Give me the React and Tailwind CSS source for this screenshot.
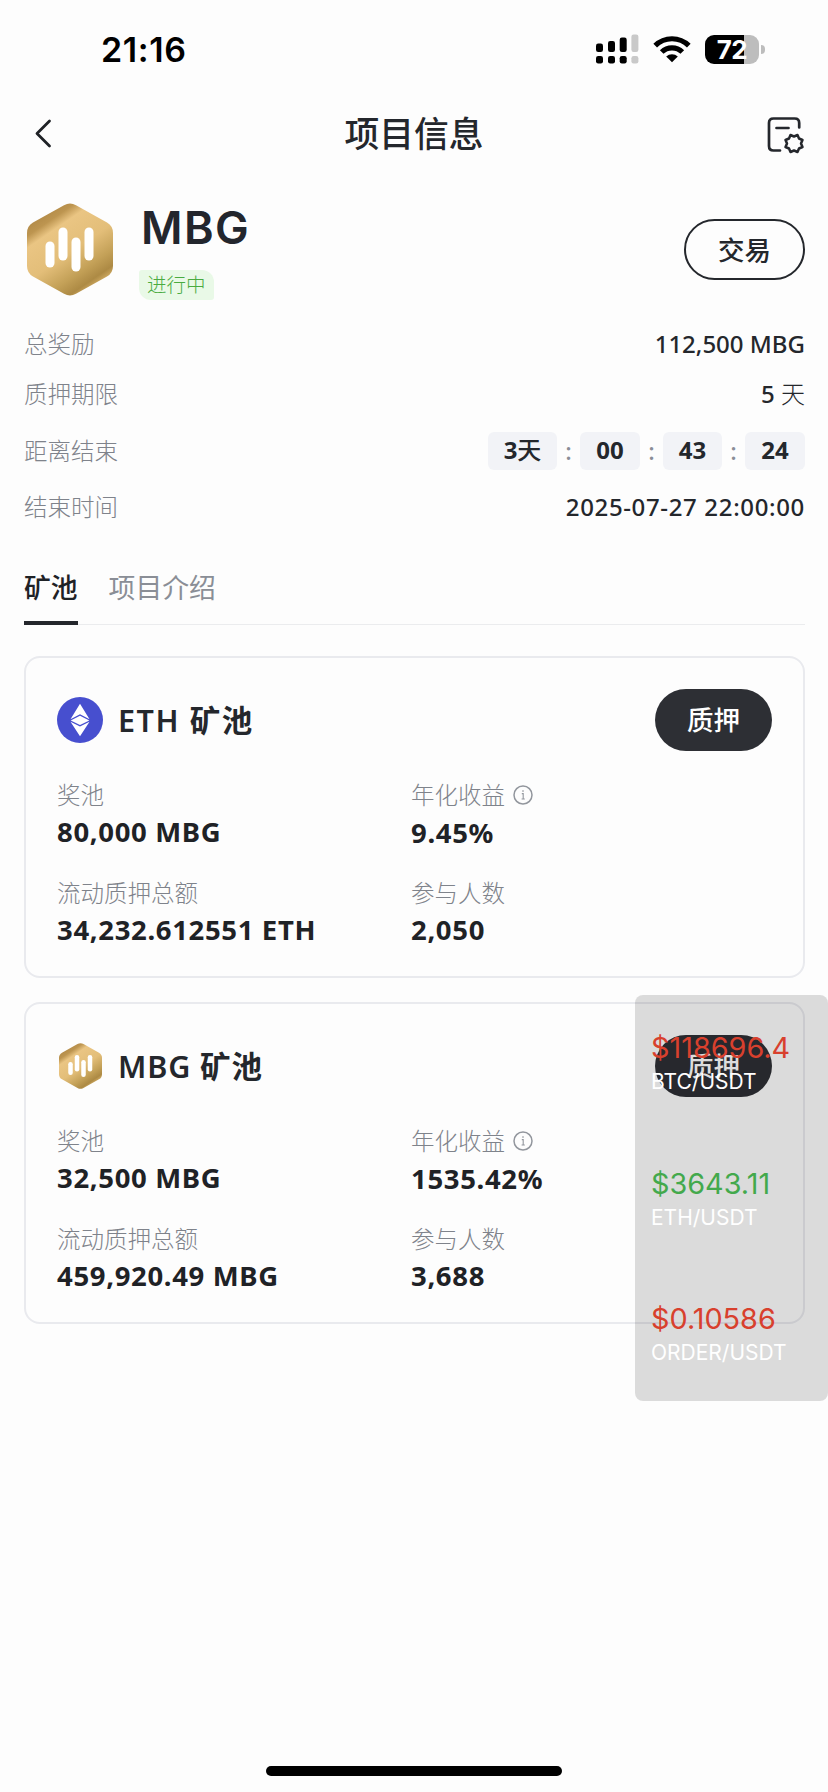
import React from 'react';

const pools = [
  {
    name: 'ETH 矿池',
    coin: 'eth',
    reward: '80,000 MBG',
    apr: '9.45%',
    staked: '34,232.612551 ETH',
    members: '2,050',
  },
  {
    name: 'MBG 矿池',
    coin: 'mbg',
    reward: '32,500 MBG',
    apr: '1535.42%',
    staked: '459,920.49 MBG',
    members: '3,688',
  },
];

const tickers = [
  { price: '$118696.4', pair: 'BTC/USDT', up: false },
  { price: '$3643.11', pair: 'ETH/USDT', up: true },
  { price: '$0.10586', pair: 'ORDER/USDT', up: false },
];

const MbgLogo = ({ className, id }) => (
  <svg viewBox="0 0 86 93" className={className} preserveAspectRatio="none">
    <defs>
      <linearGradient id={id} gradientUnits="userSpaceOnUse" x1="10" y1="12" x2="66" y2="94">
        <stop offset="0" stopColor="#b08846" />
        <stop offset="0.12" stopColor="#bd9550" />
        <stop offset="0.22" stopColor="#eac583" />
        <stop offset="0.5" stopColor="#e3be79" />
        <stop offset="0.72" stopColor="#c3a057" />
        <stop offset="0.85" stopColor="#ad8a44" />
        <stop offset="0.92" stopColor="#cfaa62" />
        <stop offset="1" stopColor="#dcb872" />
      </linearGradient>
    </defs>
    <path
      d="M37 2.2Q43 -1.2 49 2.2L80 19.5Q86 23 86 30V63Q86 70 80 73.5L49 90.8Q43 94.2 37 90.8L6 73.5Q0 70 0 63V30Q0 23 6 19.5Z"
      fill={`url(#${id})`}
    />
    <g stroke="#fff" strokeWidth="9" strokeLinecap="round">
      <path d="M23 43V60" />
      <path d="M36 29V53" />
      <path d="M49 39V64" />
      <path d="M62 29V53" />
    </g>
  </svg>
);

const EthLogo = () => (
  <svg viewBox="0 0 46 46" className="h-[46px] w-[46px]">
    <circle cx="23" cy="23" r="23" fill="#474fcf" />
    <path d="M23 6.8L32.5 22.2L23 17.2L13.5 22.2Z" fill="#fff" />
    <path d="M23 18.7L32.3 23.4L23 28L13.7 23.4Z" fill="#fff" />
    <path d="M13.5 24.8L23 29.6L32.5 24.8L23 39.2Z" fill="#fff" />
  </svg>
);

const InfoIcon = () => (
  <svg viewBox="0 0 20 20" className="ml-[8px] h-5 w-5" fill="none" stroke="#92969d" strokeWidth="1.5">
    <circle cx="10" cy="10" r="9" />
    <path d="M8.8 8.6H10.2V14M8.6 14H11.8" strokeWidth="1.1" />
    <circle cx="10" cy="6" r="0.5" fill="#92969d" strokeWidth="0.6" />
  </svg>
);

const StatusBar = () => (
  <div className="flex h-[98px] items-center justify-between pr-[63px] pl-[101px]">
    <span className="pt-[2px] font-['Inter'] text-[34px] leading-[40px] font-semibold tracking-[0.6px] text-black">21:16</span>
    <div className="flex items-center">
      <svg viewBox="0 0 43 30" className="h-[30px] w-[43px]">
        <rect x="0" y="9.5" width="7" height="8.5" rx="2.2" />
        <rect x="12" y="7" width="7" height="11" rx="2.2" />
        <rect x="23.7" y="3.5" width="7" height="14.5" rx="2.2" />
        <rect x="35.4" y="0.5" width="7" height="17.5" rx="2.2" fill="#c9c9c9" />
        <rect x="0" y="22" width="7" height="7.5" rx="2.2" />
        <rect x="12" y="22" width="7" height="7.5" rx="2.2" />
        <rect x="23.7" y="22" width="7" height="7.5" rx="2.2" />
        <rect x="35.4" y="22" width="7" height="7.5" rx="2.2" fill="#c9c9c9" />
      </svg>
      <svg viewBox="0 0 38 28" className="ml-[14px] h-[28px] w-[38px]" fill="none" stroke="#000" strokeWidth="5.2">
        <path d="M2.2 10.6A24 24 0 0 1 35.8 10.6" />
        <path d="M8.7 17A14.8 14.8 0 0 1 29.3 17" />
        <path d="M19 27.3L13.2 21.6A8.4 8.4 0 0 1 24.8 21.6Z" fill="#000" stroke="none" />
      </svg>
      <div className="relative ml-[14px] flex h-[29px] w-[54px] items-center justify-center overflow-hidden rounded-[9px] bg-[linear-gradient(90deg,#000_72%,#bdbdbd_72%)]">
        <span className="font-['Inter'] text-[26px] leading-[29px] font-bold tracking-[-0.5px] text-white">72</span>
      </div>
      <div className="ml-[2px] h-[9px] w-[4px] rounded-r-full bg-[#bdbdbd]" />
    </div>
  </div>
);

const Header = () => (
  <div className="flex h-[72px] items-center justify-between pr-[23px] pl-[35px]">
    <svg viewBox="0 0 26 30" className="h-[30px] w-[26px]" fill="none" stroke="#1f2226" strokeWidth="2.8" strokeLinecap="round" strokeLinejoin="round">
      <path d="M14.5 2L2 14.5L14.5 27" />
    </svg>
    <h1 className="text-[34.8px] leading-[40px] font-medium text-[#24272c]">项目信息</h1>
    <svg viewBox="0 0 38 38" className="mt-[2px] h-[38px] w-[38px]" fill="none" stroke="#24272c" strokeWidth="2.7" strokeLinecap="round" strokeLinejoin="round">
      <path d="M32.2 11.500V7Q32.2 2.5 27.7 2.5H6.5Q2 2.5 2 7V30Q2 34.5 6.5 34.5H13" />
      <path d="M9.5 12H21.5" />
      <path d="M35.5 31L32 32.5L30.5 36L27 34.5L23.5 36L22 32.5L18.5 31L20 27.5L18.5 24L22 22.5L23.5 19L27 20.5L30.5 19L32 22.5L35.5 24L34 27.5Z" strokeWidth="2.5" />
    </svg>
  </div>
);

const Profile = () => (
  <div className="flex h-[149px] pr-[23px] pl-[24px]">
    <MbgLogo id="mbgLarge" className="mt-[33px] ml-[3px] h-[93px] w-[86px]" />
    <div className="ml-[26px] flex flex-col items-start">
      <div className="mt-[34px] ml-[2px] font-['Inter'] text-[45px] leading-[48px] font-semibold tracking-[1.4px] text-[#23262d]">MBG</div>
      <div className="mt-[18px] h-[30px] rounded-tl-[3px] rounded-tr-[12px] rounded-br-[3px] rounded-bl-[12px] bg-[#e9f9e7] px-[8px] text-[19.5px] leading-[29px] font-light text-[#4aab40]">
        进行中
      </div>
    </div>
    <button className="mt-[49px] ml-auto h-[61px] w-[121px] rounded-full border-2 border-[#24272c] text-[26.5px] leading-[54px] font-medium text-[#24272c]">
      交易
    </button>
  </div>
);

const Row = ({ label, className, children }) => (
  <div className={`flex items-center justify-between pr-[23px] pl-[24px] ${className}`}>
    <span className="text-[23.5px] leading-[28px] font-light text-[#7f838b]">{label}</span>
    <span className="text-[24px] leading-[28px] font-medium whitespace-nowrap text-[#24272c]">{children}</span>
  </div>
);

const TimeBox = ({ className, children }) => (
  <span className={`flex h-[38px] items-center justify-center rounded-[6px] bg-[#f2f3f7] pb-[2px] font-bold ${className}`}>
    {children}
  </span>
);

const Colon = () => <span className="w-[23px] text-center font-medium text-[#8a8e96]">:</span>;

const Info = () => (
  <div>
    <Row label="总奖励" className="h-[50px]">112,500 MBG</Row>
    <Row label="质押期限" className="h-[50px]">
      5 <span className="font-light">天</span>
    </Row>
    <Row label="距离结束" className="h-[64px]">
      <span className="flex items-center">
        <TimeBox className="w-[69px]">3<span className="font-medium">天</span></TimeBox>
        <Colon />
        <TimeBox className="w-[60px]">00</TimeBox>
        <Colon />
        <TimeBox className="w-[59px]">43</TimeBox>
        <Colon />
        <TimeBox className="w-[60px]">24</TimeBox>
      </span>
    </Row>
    <Row label="结束时间" className="h-[47px]">
      <span className="tracking-[0.65px]">2025-07-27 22:00:00</span>
    </Row>
  </div>
);

const Tabs = () => (
  <div className="mr-[23px] ml-[24px] flex h-[95px] border-b border-[#ebecee] text-[26.8px] leading-[32px]">
    <div className="-mb-px flex flex-col justify-between border-b-4 border-[#24272c] pt-[42px] font-medium text-[#1f2226]">矿池</div>
    <div className="ml-[31px] pt-[42px] font-normal text-[#8a8e96]">项目介绍</div>
  </div>
);

const Stat = ({ label, value, info, className = '' }) => (
  <div>
    <div className="flex h-[32px] items-center text-[23.5px] leading-[32px] font-light text-[#7f838b]">
      {label}
      {info && <InfoIcon />}
    </div>
    <div className={`text-[27.5px] leading-[36px] font-bold tracking-[0.65px] text-[#1f2226] ${className}`}>{value}</div>
  </div>
);

const PoolCard = ({ pool }) => (
  <div className="h-[322px] rounded-[16px] border-2 border-[#e9eaee] px-[31px]">
    <div className="mt-[31px] flex h-[62px] items-center">
      {pool.coin === 'eth' ? (
        <EthLogo />
      ) : (
        <div className="flex w-[46px] justify-center">
          <MbgLogo id="mbgSmall" className="h-[46px] w-[43px]" />
        </div>
      )}
      <h2 className={`ml-[15px] text-[30.5px] leading-[40px] font-semibold text-[#24272c] ${pool.coin === 'eth' ? 'tracking-[1.6px]' : 'tracking-[0.9px]'}`}>
        {pool.name}
      </h2>
      <button className="ml-auto h-[62px] w-[117px] rounded-full bg-[#2d2f34] text-[26.5px] leading-[60px] font-medium text-white">
        质押
      </button>
    </div>
    <div className="mt-[28px] grid grid-cols-[354px_1fr] gap-y-[27px]">
      <Stat label="奖池" value={pool.reward} className="pt-[3px]" />
      <Stat label="年化收益" value={pool.apr} info className="pt-[4px] -mb-[1px]" />
      <Stat label="流动质押总额" value={pool.staked} className="pt-[3px]" />
      <Stat label="参与人数" value={pool.members} className="pt-[3px]" />
    </div>
  </div>
);

// Floating price widget, sits over the page
const PriceWidget = () => (
  <div className="absolute top-[995px] right-0 h-[406px] w-[193px] rounded-[8px] bg-black/[0.135] pt-[34px] pl-[16px] font-['Inter']">
    {tickers.map((t) => (
      <div key={t.pair} className="h-[135.5px]">
        <div className={`text-[28.8px] leading-[38px] ${t.up ? 'text-[#43a94c]' : 'text-[#d8402d]'}`}>{t.price}</div>
        <div className="text-[21px] leading-[30px] text-white">{t.pair}</div>
      </div>
    ))}
  </div>
);

const App = () => (
  <div className="relative flex h-[1792px] w-[828px] flex-col overflow-hidden bg-[#fdfdfd] font-['Noto_Sans','Noto_Sans_CJK_SC',sans-serif]">
    <StatusBar />
    <Header />
    <Profile />
    <Info />
    <Tabs />
    <div className="mt-[31px] flex flex-col gap-[24px] pr-[23px] pl-[24px]">
      {pools.map((pool) => (
        <PoolCard key={pool.coin} pool={pool} />
      ))}
    </div>
    <PriceWidget />
    <div className="mx-auto mt-auto mb-[16px] h-[10px] w-[296px] rounded-full bg-black" />
  </div>
);

export default App;
